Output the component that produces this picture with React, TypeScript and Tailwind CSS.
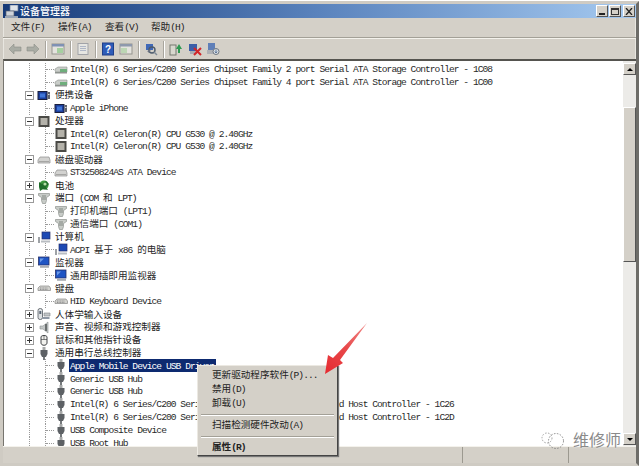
const latin = 'font-["Liberation_Mono",monospace] text-[9.6px] tracking-[-0.96px]';
const cjk = 'font-["Noto_Sans_CJK_SC",sans-serif] text-[9.6px]';

// SimSun style text: half width latin next to full width hanzi
function Txt({ s, bold = false }: { s: string; bold?: boolean }) {
  const parts = s.match(/[\u4e00-\u9fff、]+|[^\u4e00-\u9fff、]+/g) || [];
  return (
    <span className={`block whitespace-pre text-[9.6px] leading-none ${bold ? 'font-bold' : ''}`}>
      {parts.map((p, i) => (
        <span key={i} className={/[\u4e00-\u9fff、]/.test(p) ? cjk : latin}>
          {p}
        </span>
      ))}
    </span>
  );
}

type Kind = 'ctrl' | 'phone' | 'cpu' | 'disk' | 'battery' | 'port' | 'pc' | 'monitor' | 'kbd' | 'hid' | 'sound' | 'mouse' | 'usb';

function DevIcon({ kind }: { kind: Kind }) {
  return (
    <svg width="14" height="13" viewBox="0 0 14 13" className="shrink-0">
      {kind === 'ctrl' && (
        <>
          <path d="M1 6l3-2h9v5H2l-1-1z" fill="#c9cdc9" stroke="#8d918d" strokeWidth=".6" />
          <rect x="6" y="6" width="7" height="4" fill="#6fae7c" />
          <rect x="1" y="9" width="12" height="1.5" fill="#8f9490" />
        </>
      )}
      {kind === 'phone' && (
        <>
          <rect x="1" y="2.5" width="9" height="8" fill="#1c3f9c" stroke="#1a1f3c" />
          <rect x="3" y="4.5" width="5" height="4" fill="#3f76d8" />
          <rect x="10.5" y="3" width="2.5" height="7" fill="#60646e" />
          <rect x="11" y="5" width="1.5" height="1" fill="#d8dade" />
        </>
      )}
      {kind === 'cpu' && (
        <>
          <rect x="1.5" y="1" width="11" height="11" fill="#4a4a46" />
          <rect x="3.5" y="3" width="7" height="7" fill="#b4b2aa" />
        </>
      )}
      {kind === 'disk' && (
        <>
          <path d="M1 7l2-3h9l1 3v3H1z" fill="#d2d2d0" stroke="#8e8e8c" strokeWidth=".7" />
          <rect x="2" y="8" width="10" height="1" fill="#a6a6a4" />
        </>
      )}
      {kind === 'battery' && (
        <>
          <circle cx="7" cy="6" r="4.6" fill="#3f9a3f" />
          <path d="M2 3l3 2 4-3 3 3-3 3 2 3-5-1-3 2-1-4z" fill="#1f6d2a" />
          <circle cx="8" cy="5" r="1.6" fill="#b6e0a8" />
        </>
      )}
      {kind === 'port' && (
        <>
          <path d="M1.5 1.5h11v2l-3 2v3l-1 3h-3l-1-3v-3l-3-2z" fill="#c8ccc8" stroke="#8e928e" strokeWidth=".7" />
          <rect x="5" y="3" width="4" height="5" fill="#a5aaa5" />
        </>
      )}
      {kind === 'pc' && (
        <>
          <rect x="5" y="1" width="8" height="7" fill="#1c49b4" stroke="#26306a" strokeWidth=".7" />
          <rect x="1" y="6" width="2" height="6" fill="#9ea2a6" />
          <rect x="4" y="9.5" width="9" height="2" fill="#b9bdc2" />
        </>
      )}
      {kind === 'monitor' && (
        <>
          <rect x="1.5" y="1" width="10.5" height="8" fill="#1f55c4" stroke="#27306a" strokeWidth=".8" />
          <path d="M3 2.5h4l-4 4z" fill="#6d9ae6" />
          <rect x="3" y="10" width="9" height="1.8" fill="#a9adb3" />
        </>
      )}
      {kind === 'kbd' && (
        <>
          <path d="M1 6l2-2h9l1.500 2v2.500H1z" fill="#d2d2ce" stroke="#8a8a88" strokeWidth=".7" />
          <path d="M3 6h8M3 7.500h8" stroke="#77777a" strokeWidth=".7" strokeDasharray="1 .6" />
        </>
      )}
      {kind === 'hid' && (
        <>
          <rect x="1" y="0.500" width="4.500" height="11" rx="2" fill="#dfe2e4" stroke="#52585e" strokeWidth=".8" />
          <rect x="2.300" y="3" width="2" height="3" fill="#5e6a78" />
          <path d="M7 5h6v3H7z" fill="#c2c6c8" stroke="#7f8488" strokeWidth=".6" />
          <path d="M5.500 9h7v2h-7z" fill="#8e98a4" />
        </>
      )}
      {kind === 'sound' && (
        <>
          <path d="M3 5h3l5-4v11l-5-4H3z" fill="#c4c8c8" stroke="#8b9090" strokeWidth=".6" />
          <rect x="8" y="3" width="2" height="7" fill="#6b7070" />
        </>
      )}
      {kind === 'mouse' && (
        <>
          <path d="M4 3c0-2 6-2 6 0v6c0 3-6 3-6 0z" fill="#f2f2ee" stroke="#303236" strokeWidth=".9" />
          <path d="M4 5.500h6M7 1.500v4" stroke="#303236" strokeWidth=".6" />
        </>
      )}
      {kind === 'usb' && (
        <>
          <rect x="5.500" y="0" width="3" height="3" fill="#a6a8a8" />
          <path d="M3.500 3h7v4l-1.500 3H5L3.500 7z" fill="#5d6165" />
          <rect x="6" y="10" width="2" height="3" fill="#75797c" />
        </>
      )}
    </svg>
  );
}

function VLine() {
  return <div className="h-full w-px shrink-0 border-l border-dotted border-[#9a9a9a]" />;
}

function Group({ kind, label, open = true }: { kind: Kind; label: string; open?: boolean }) {
  return (
    <div className="flex h-[12.9px] items-center">
      <div className="ml-[21px] flex h-[9px] w-[9px] shrink-0 items-center justify-center border border-[#9a9a9a] bg-white">
        <div className="relative h-px w-[5px] bg-[#333]">
          {!open && <div className="absolute left-[2px] top-[-2px] h-[5px] w-px bg-[#333]" />}
        </div>
      </div>
      <div className="ml-[3px] mr-[4px] flex">
        <DevIcon kind={kind} />
      </div>
      <span className="text-[#222]">
        <Txt s={label} />
      </span>
    </div>
  );
}

function Leaf({ kind, label, selected = false }: { kind: Kind; label: string; selected?: boolean }) {
  return (
    <div className="flex h-[12.9px] items-center">
      <div className="ml-[25px] h-full">
        <VLine />
      </div>
      <div className="ml-[15px] flex h-full w-[9px] shrink-0 items-center border-l border-dotted border-[#9a9a9a]">
        <div className="w-full border-t border-dotted border-[#9a9a9a]" />
      </div>
      <DevIcon kind={kind} />
      {selected ? (
        <span className="ml-[1px] flex h-[13px] w-[147px] items-center bg-[#0d2a70] pl-px text-white">
          <Txt s={label} />
        </span>
      ) : (
        <span className="ml-[2px] text-[#2a2a2a]">
          <Txt s={label} />
        </span>
      )}
    </div>
  );
}

const INTEL = 'Intel(R) 6 Series/C200 Series Chipset Family';

const rows: { g?: boolean; k: Kind; t: string; open?: boolean; sel?: boolean }[] = [
  { k: 'ctrl', t: `${INTEL} 2 port Serial ATA Storage Controller - 1C08` },
  { k: 'ctrl', t: `${INTEL} 4 port Serial ATA Storage Controller - 1C00` },
  { g: true, k: 'phone', t: '便携设备' },
  { k: 'phone', t: 'Apple iPhone' },
  { g: true, k: 'cpu', t: '处理器' },
  { k: 'cpu', t: 'Intel(R) Celeron(R) CPU G530 @ 2.40GHz' },
  { k: 'cpu', t: 'Intel(R) Celeron(R) CPU G530 @ 2.40GHz' },
  { g: true, k: 'disk', t: '磁盘驱动器' },
  { k: 'disk', t: 'ST3250824AS ATA Device' },
  { g: true, k: 'battery', t: '电池', open: false },
  { g: true, k: 'port', t: '端口 (COM 和 LPT)' },
  { k: 'port', t: '打印机端口 (LPT1)' },
  { k: 'port', t: '通信端口 (COM1)' },
  { g: true, k: 'pc', t: '计算机' },
  { k: 'pc', t: 'ACPI 基于 x86 的电脑' },
  { g: true, k: 'monitor', t: '监视器' },
  { k: 'monitor', t: '通用即插即用监视器' },
  { g: true, k: 'kbd', t: '键盘' },
  { k: 'kbd', t: 'HID Keyboard Device' },
  { g: true, k: 'hid', t: '人体学输入设备', open: false },
  { g: true, k: 'sound', t: '声音、视频和游戏控制器', open: false },
  { g: true, k: 'mouse', t: '鼠标和其他指针设备', open: false },
  { g: true, k: 'usb', t: '通用串行总线控制器' },
  { k: 'usb', t: 'Apple Mobile Device USB Driver', sel: true },
  { k: 'usb', t: 'Generic USB Hub' },
  { k: 'usb', t: 'Generic USB Hub' },
  { k: 'usb', t: `${INTEL} USB Enhanced Host Controller - 1C26` },
  { k: 'usb', t: `${INTEL} USB Enhanced Host Controller - 1C2D` },
  { k: 'usb', t: 'USB Composite Device' },
  { k: 'usb', t: 'USB Root Hub' },
];

function ToolSep() {
  return <div className="ml-[5px] mr-[4px] h-[17px] w-[2px] border-l border-r border-l-[#a8a59d] border-r-white" />;
}

function Tool({ children }: { children: React.ReactNode }) {
  return (
    <svg width="14" height="14" viewBox="0 0 14 14" className="shrink-0">
      {children}
    </svg>
  );
}

function Toolbar() {
  return (
    <div className="flex h-[21px] items-center border-t border-t-[#f4f2ec] pl-[5px]">
      <Tool>
        <path d="M1 7l5-5v3h7v4H6v3z" fill="#a9aca4" stroke="#8c8f88" strokeWidth=".6" />
      </Tool>
      <div className="w-[4px]" />
      <Tool>
        <path d="M13 7L8 2v3H1v4h7v3z" fill="#a9aca4" stroke="#8c8f88" strokeWidth=".6" />
      </Tool>
      <ToolSep />
      <Tool>
        <rect x="1" y="2" width="12" height="10" fill="#e4e3de" stroke="#96958f" />
        <rect x="1" y="2" width="12" height="2.500" fill="#7f91b4" />
        <rect x="6" y="6" width="6" height="5" fill="#a5cf9f" />
      </Tool>
      <ToolSep />
      <Tool>
        <rect x="2" y="1.500" width="10" height="11" fill="#e6e6e2" stroke="#a1a3a8" />
        <path d="M4 4.500h6M4 6.500h6M4 8.500h6" stroke="#aeb6c6" />
      </Tool>
      <ToolSep />
      <Tool>
        <rect x="1.500" y="1" width="11" height="12" fill="#2e5cb8" stroke="#1f3f8a" />
        <text x="7" y="10.500" textAnchor="middle" fontSize="10" fontWeight="700" fill="#fff" fontFamily="Liberation Sans, sans-serif">?</text>
      </Tool>
      <div className="w-[4px]" />
      <Tool>
        <rect x="1" y="2" width="12" height="10" fill="#e4e3de" stroke="#96958f" />
        <rect x="1" y="2" width="12" height="2.500" fill="#8e98ac" />
        <rect x="2" y="6" width="6" height="5" fill="#bcd6b4" />
      </Tool>
      <ToolSep />
      <Tool>
        <rect x="2" y="2" width="7" height="6" fill="#4069b8" />
        <circle cx="8" cy="8" r="3" fill="none" stroke="#4c5a6c" strokeWidth="1.400" />
        <path d="M4 10l2-2" stroke="#6a7180" strokeWidth="2" />
        <path d="M10 10l3 3" stroke="#7f8a96" strokeWidth="1.400" />
      </Tool>
      <ToolSep />
      <Tool>
        <rect x="1" y="3" width="6" height="10" fill="#d8d8ce" stroke="#75786e" />
        <path d="M7 7l3-5 3 5h-2v4H9V7z" fill="#2f9a52" />
      </Tool>
      <div className="w-[5px]" />
      <Tool>
        <rect x="1" y="2" width="8" height="7" fill="#3d5fa8" />
        <rect x="2" y="9" width="6" height="3" fill="#a9acb2" />
        <path d="M6 6l7 7M13 6l-7 7" stroke="#d2262a" strokeWidth="2" />
      </Tool>
      <div className="w-[4px]" />
      <Tool>
        <rect x="2" y="1" width="7" height="7" fill="#5f7fb8" />
        <rect x="1" y="8" width="7" height="4" fill="#aeb1b6" />
        <circle cx="10" cy="9.500" r="3" fill="#dfe3e6" stroke="#6d7580" />
        <path d="M10 7.500v3M8.800 9.500l1.200 1.500 1.200-1.500" stroke="#30507f" strokeWidth=".7" fill="none" />
      </Tool>
    </div>
  );
}

function MenuLine() {
  return <div className="mx-[3px] my-[3px] border-t border-b border-t-[#a3a097] border-b-white" />;
}

function ContextMenu() {
  const entry = 'flex h-[14px] items-center pl-[14px] text-[#222]';
  return (
    <div className="absolute left-[197px] top-[365px] h-[91px] w-[141px] border border-t-[#ece9e2] border-l-[#ece9e2] border-r-[#444] border-b-[#444] bg-[#d4d0c8] pt-[2px] shadow-[1px_1px_1px_#777]">
      <div className={entry}><Txt s="更新驱动程序软件(P)..." /></div>
      <div className="flex h-[14.500px] items-center pl-[14px] pt-px text-[#222]"><Txt s="禁用(D)" /></div>
      <div className={entry}><Txt s="卸载(U)" /></div>
      <MenuLine />
      <div className={entry}><Txt s="扫描检测硬件改动(A)" /></div>
      <MenuLine />
      <div className={entry}><Txt s="属性(R)" bold /></div>
    </div>
  );
}

export default function App() {
  return (
    <div className="relative h-[467px] w-[641px] overflow-hidden bg-white">
      <div className="mr-[2px] mt-[1px] flex h-[465px] flex-col border-[3px] border-[#cfcbc3] border-r-[#6d6c68] bg-[#d4d0c8] shadow-[inset_0_0_0_1px_#e8e6e0]">
        {/* title */}
        <div className="flex h-[14px] shrink-0 items-center bg-gradient-to-r from-[#163a78] via-[#5a83bd] to-[#a6caf0] pl-[2px] pr-[1px]">
          <svg width="14" height="13" viewBox="0 0 14 13" className="shrink-0">
            <rect x="5" y="0" width="8" height="6" fill="#dfe4ea" stroke="#6d7d96" strokeWidth=".7" />
            <rect x="1" y="6" width="8" height="5" fill="#cfd4da" stroke="#59606e" strokeWidth=".7" />
            <rect x="0" y="11" width="13" height="2" fill="#9aa6b6" />
          </svg>
          <span className='ml-[1px] font-["Noto_Sans_CJK_SC",sans-serif] text-[10px] font-medium leading-none text-white'>设备管理器</span>
          <div className="ml-auto flex gap-px">
            {['min', 'max'].map(b => (
              <div key={b} className="flex h-[12px] w-[12px] items-center justify-center border border-t-white border-l-white border-r-[#555] border-b-[#555] bg-[#d4d0c8]">
                {b === 'min' ? <div className="mt-[5px] h-[2px] w-[6px] bg-[#222]" /> : <div className="h-[7px] w-[8px] border border-t-2 border-[#333]" />}
              </div>
            ))}
            <div className="ml-px flex h-[12px] w-[12px] items-center justify-center border border-t-white border-l-white border-r-[#555] border-b-[#555] bg-[#d4d0c8]">
              <svg width="8" height="7" viewBox="0 0 8 7"><path d="M1 0l6 7M7 0L1 7" stroke="#222" strokeWidth="1.300" /></svg>
            </div>
          </div>
        </div>

        {/* menu bar */}
        <div className="flex h-[20px] shrink-0 items-center border-b border-b-[#a3a097] pl-[8px] text-[#222]">
          <div className="w-[47px]"><Txt s="文件(F)" /></div>
          <div className="w-[47px]"><Txt s="操作(A)" /></div>
          <div className="w-[46px]"><Txt s="查看(V)" /></div>
          <div><Txt s="帮助(H)" /></div>
        </div>

        <Toolbar />

        {/* tree + scrollbar */}
        <div className="flex min-h-0 flex-1 border-t-2 border-l border-t-[#55544f] border-l-[#77756f] bg-white">
          <div className="min-w-0 flex-1 overflow-hidden pt-[2px]">
            {rows.map((r, i) =>
              r.g ? (
                <Group key={i} kind={r.k} label={r.t} open={r.open ?? true} />
              ) : (
                <Leaf key={i} kind={r.k} label={r.t} selected={r.sel} />
              ),
            )}
          </div>
          <div className="flex w-[13px] shrink-0 flex-col bg-[#ecebe8]">
            <div className="mt-[2px] flex h-[12px] shrink-0 items-center justify-center border border-t-white border-l-white border-r-[#555] border-b-[#555] bg-[#d4d0c8]">
              <div className="h-0 w-0 border-x-[3px] border-b-[3px] border-x-transparent border-b-black" />
            </div>
            <div className="mt-[32px] h-[155px] shrink-0 border border-t-white border-l-white border-r-[#555] border-b-[#555] bg-[#d4d0c8]" />
            <div className="mb-px mt-auto flex h-[12px] shrink-0 items-center justify-center border border-t-white border-l-white border-r-[#555] border-b-[#555] bg-[#d4d0c8]">
              <div className="h-0 w-0 border-x-[3px] border-t-[3px] border-x-transparent border-t-black" />
            </div>
          </div>
        </div>

        {/* status bar */}
        <div className="flex h-[17px] shrink-0 border-t border-t-[#f4f2ec] bg-[#d4d0c8]">
          <div className="w-[460px] border-r border-r-[#9c9990]" />
          <div className="w-[106px] border-r border-r-[#9c9990]" />
          <div className="flex-1" />
        </div>
      </div>

      <ContextMenu />

      {/* red arrow */}
      <svg width="641" height="467" viewBox="0 0 641 467" className="pointer-events-none absolute left-0 top-0">
        <defs>
          <linearGradient id="arrowFade" x1="367" y1="323" x2="326" y2="375" gradientUnits="userSpaceOnUse">
            <stop offset="0" stopColor="#f08a88" />
            <stop offset=".5" stopColor="#e8484a" />
            <stop offset="1" stopColor="#e62a30" />
          </linearGradient>
        </defs>
        <path d="M367 323L340 360l3 3-18 11 3-19 5 3z" fill="url(#arrowFade)" />
        {/* watermark logo */}
        <circle cx="556" cy="441" r="7.500" fill="none" stroke="#8a8a8a" strokeWidth="1" strokeDasharray="1.500 1.500" />
        <circle cx="547" cy="438" r="5" fill="none" stroke="#a2a2a2" strokeWidth="1" strokeDasharray="1.500 1.500" />
      </svg>
      <div className='absolute left-[573px] top-[429px] font-["Noto_Sans_CJK_SC",sans-serif] text-[16px] leading-[20px] text-[#8a8a8a] [text-shadow:0_0_2px_#fff]'>
        维修师
      </div>
    </div>
  );
}
